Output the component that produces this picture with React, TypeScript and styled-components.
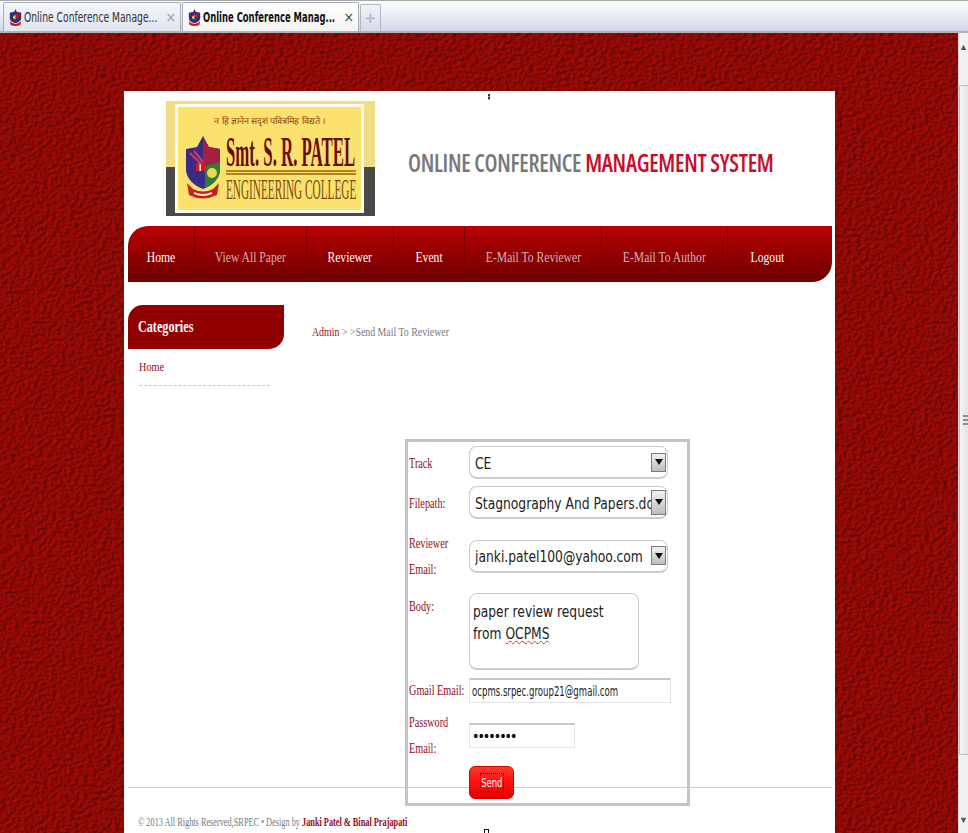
import React, { FC } from 'react';
import styled, { createGlobalStyle } from 'styled-components';

const leather = encodeURIComponent(
    `<svg xmlns='http://www.w3.org/2000/svg' width='300' height='300'><filter id='n' x='0' y='0' width='100%' height='100%' color-interpolation-filters='sRGB'><feTurbulence type='fractalNoise' baseFrequency='.22 .3' numOctaves='3' seed='7' stitchTiles='stitch'/><feDiffuseLighting surfaceScale='1.5' diffuseConstant='1.05' lighting-color='#a00b06'><feDistantLight azimuth='35' elevation='58'/></feDiffuseLighting></filter><rect width='100%' height='100%' filter='url(#n)'/></svg>`
);

const narrowSans = `'DejaVu Sans Condensed', 'DejaVu Sans', sans-serif`;

const GlobalStyle = createGlobalStyle`
    html, body {
        margin: 0;
        padding: 0;
        overflow: hidden;
    }
    body {
        font-family: 'Liberation Serif', serif;
    }
`;

const Screen = styled.div`
    position: relative;
    width: 968px;
    height: 833px;
    display: flex;
    flex-direction: column;
    overflow: hidden;
`;

// the text of the page is narrower than any installed font
const Squeeze = styled.span<{ $x: number; $center?: boolean }>`
    display: inline-block;
    white-space: nowrap;
    transform: scaleX(${({ $x }) => $x});
    transform-origin: ${({ $center }) => ($center ? 'center' : 'left')} center;
`;

/* browser chrome */
const TabBar = styled.div`
    height: 33px;
    box-sizing: border-box;
    display: flex;
    align-items: flex-end;
    gap: 1px;
    padding-left: 3px;
    border-top: 1px solid #a9a9a9;
    border-bottom: 2px solid #b4b4b4;
    background: linear-gradient(#fbfcfe 0%, #eef1f8 40%, #cfd7e8 100%);
    font-family: ${narrowSans};
    font-stretch: condensed;
`;

const Tab = styled.div<{ $active?: boolean }>`
    width: ${({ $active }) => ($active ? '177px' : '178px')};
    height: 29px;
    box-sizing: border-box;
    display: flex;
    align-items: center;
    gap: 2px;
    padding: 0 4px 0 5px;
    border: 1px solid #a8adb8;
    border-bottom: 0;
    border-radius: 2px 2px 0 0;
    background: ${({ $active }) => ($active ? 'linear-gradient(#ffffff, #f4f4f4)' : 'linear-gradient(#f4f6fa, #dfe4ef)')};
    color: ${({ $active }) => ($active ? '#111' : '#333')};
    font-size: 14px;
    font-weight: ${({ $active }) => ($active ? 700 : 400)};
    white-space: nowrap;
`;

const TabTitle = styled.span`
    flex: 1;
    min-width: 0;
    overflow: hidden;
`;

const TabClose = styled.span<{ $active?: boolean }>`
    color: ${({ $active }) => ($active ? '#444' : '#999')};
    font-size: 14px;
    font-weight: 400;
`;

const NewTab = styled.div`
    width: 21px;
    height: 27px;
    box-sizing: border-box;
    display: flex;
    align-items: center;
    justify-content: center;
    border: 1px solid #b0b5c0;
    border-bottom: 0;
    border-radius: 2px 2px 0 0;
    background: linear-gradient(#f0f2f7, #d5dbe9);
    color: #a9acb3;
    font-size: 13px;
`;

const Viewport = styled.div`
    flex: 1;
    min-height: 0;
    display: flex;
`;

const Backdrop = styled.div`
    flex: 1;
    min-width: 0;
    padding-top: 58px;
    padding-left: 124px;
    background-color: #8d0806;
    background-image: url("data:image/svg+xml,${leather}");
`;

const ScrollTrack = styled.div`
    width: 10px;
    display: flex;
    flex-direction: column;
    background: #f1f1f1;
    border-left: 1px solid #d8d8d8;
    box-sizing: border-box;
    overflow: hidden;
`;

const ScrollArrow = styled.div<{ $down?: boolean }>`
    height: ${({ $down }) => ($down ? 78 : 52)}px;
    display: flex;
    justify-content: flex-end;
    align-items: ${({ $down }) => ($down ? 'flex-end' : 'flex-start')};
    padding: ${({ $down }) => ($down ? '0 0 8px' : '10px 0 0')};
    box-sizing: border-box;
    color: #555;
    font-size: 9px;
    line-height: 9px;
`;

const ScrollThumb = styled.div`
    flex: 1;
    display: flex;
    flex-direction: column;
    justify-content: center;
    gap: 2px;
    padding-left: 3px;
    border: 1px solid #bdbdbd;
    border-right: 0;
    background: linear-gradient(90deg, #f4f4f4, #e3e3e3);
    border-radius: 2px 0 0 2px;
`;

const ScrollGrip = styled.div`
    height: 2px;
    background: #8f8f8f;
`;

/* page */
const Wrapper = styled.div`
    width: 711px;
    height: 760px;
    box-sizing: border-box;
    padding: 0 3px 0 4px;
    background: #fff;
`;

const Header = styled.header`
    height: 135px;
    box-sizing: border-box;
    display: flex;
    align-items: flex-start;
    padding: 10px 0 0 38px;
`;

const Logo = styled.div`
    flex: none;
    width: 209px;
    height: 115px;
    box-sizing: border-box;
    padding: 3px 11px 3px 9px;
    background: linear-gradient(#f2dd85 0 57%, #4a4a48 57% 100%);
`;

const LogoPanel = styled.div`
    height: 100%;
    box-sizing: border-box;
    border: 3px solid #fffdf0;
    background: #fbe26f;
    display: grid;
    grid-template-columns: 48px 1fr;
    grid-template-rows: 29px 1fr;
    overflow: hidden;
`;

const LogoMotto = styled.div`
    grid-column: 1 / 3;
    padding-top: 8px;
    text-align: center;
    color: #8c3a10;
    font-size: 9px;
    line-height: 12px;
    white-space: nowrap;
`;

const LogoCrest = styled.div`
    width: 36px;
    height: 66px;
    margin-left: 7px;
`;

const LogoText = styled.div`
    display: flex;
    flex-direction: column;
    width: 130px;
`;

const LogoName = styled.div`
    height: 32px;
    color: #6b0b08;
    font-size: 42px;
    line-height: 32px;
    font-weight: 700;
    white-space: nowrap;
    transform: scaleX(0.4);
    transform-origin: left center;
`;

const LogoRule = styled.div`
    height: 5px;
    margin-top: 2px;
    border-top: 2px solid #b8811f;
    border-bottom: 2px solid #b8811f;
    box-sizing: border-box;
`;

const LogoCollege = styled.div`
    height: 27px;
    color: #7b4c10;
    font-size: 30px;
    line-height: 27px;
    white-space: nowrap;
    transform: scaleX(0.375);
    transform-origin: left center;
`;

const SiteTitle = styled.h1`
    margin: 46px 0 0 33px;
    font-family: 'Open Sans', sans-serif;
    font-size: 25px;
    line-height: 30px;
    font-weight: 600;
    font-stretch: 75%;
    letter-spacing: -0.3px;
    color: #77787a;
`;

const TitleAccent = styled.span`
    color: #c60f2b;
    font-weight: 650;
`;

const Nav = styled.nav`
    height: 56px;
    display: flex;
    border-radius: 20px 0 20px 0;
    background: linear-gradient(#b90000, #6c0000);
    overflow: hidden;
`;

const NavItem = styled.a<{ $width: number; $muted?: boolean }>`
    width: ${({ $width }) => $width}px;
    box-sizing: border-box;
    display: flex;
    align-items: center;
    justify-content: center;
    padding-top: 6px;
    border-right: 1px solid #7d0000;
    color: ${({ $muted }) => ($muted ? '#cfb2bb' : '#fff')};
    font-size: 15.5px;
    &:last-child {
        border-right: 0;
        padding-right: 26px;
    }
`;

const Content = styled.div`
    height: 505px;
    display: flex;
`;

const Sidebar = styled.aside`
    width: 156px;
    padding-top: 23px;
`;

const SidebarTitle = styled.div`
    height: 44px;
    box-sizing: border-box;
    padding-left: 10px;
    display: flex;
    align-items: center;
    border-radius: 15px 0 15px 0;
    background: #930000;
    color: #fff;
    font-size: 16px;
    font-weight: 700;
`;

const SidebarLink = styled.a`
    display: block;
    width: 131px;
    margin: 9px 0 0 11px;
    padding-bottom: 10px;
    border-bottom: 1px dashed #c8c8c8;
    color: #8a0a1e;
    font-size: 13.5px;
    line-height: 17px;
`;

const Main = styled.main`
    flex: 1;
    padding: 41px 0 0 28px;
`;

const Breadcrumb = styled.div`
    height: 18px;
    color: #777b80;
    font-size: 13.5px;
    line-height: 18px;
`;

const BreadcrumbRoot = styled.span`
    color: #a80f1c;
`;

const FormBox = styled.form`
    width: 285px;
    height: 367px;
    box-sizing: border-box;
    margin: 98px 0 0 93px;
    padding: 4px 0 0 1px;
    border: 3px solid #c4c4c4;
    display: flex;
    flex-direction: column;
`;

const Row = styled.div<{ $top?: number; $start?: boolean }>`
    display: grid;
    grid-template-columns: 60px 1fr;
    align-items: ${({ $start }) => ($start ? 'start' : 'center')};
    margin-top: ${({ $top }) => $top ?? 0}px;
`;

const Label = styled.label`
    display: block;
    color: #8e0d1d;
    font-size: 14px;
    line-height: 26px;
    white-space: nowrap;
    transform: translateY(1px) scaleX(0.73);
    transform-origin: left center;
`;

const Select = styled.div`
    width: 199px;
    height: 33px;
    box-sizing: border-box;
    display: flex;
    align-items: center;
    padding: 0 1px 0 5px;
    border: 1px solid #cbcbcb;
    border-bottom-width: 2px;
    border-radius: 8px;
    background: #fff;
    font-family: ${narrowSans};
    font-stretch: condensed;
    font-size: 16px;
    color: #222;
`;

const SelectValue = styled.span`
    flex: 1;
    min-width: 0;
    padding-top: 2px;
    overflow: hidden;
    white-space: nowrap;
`;

const SelectArrow = styled.span<{ $height: number }>`
    flex: none;
    width: 15px;
    height: ${({ $height }) => $height}px;
    box-sizing: border-box;
    display: flex;
    align-items: center;
    justify-content: center;
    border: 1px solid #7c7c7c;
    background: linear-gradient(#f2f2f2, #bdbdbd);
    &::after {
        content: '';
        border-top: 6px solid #111;
        border-left: 4px solid transparent;
        border-right: 4px solid transparent;
    }
`;

const TextArea = styled.div`
    width: 170px;
    height: 77px;
    box-sizing: border-box;
    padding: 7px 3px;
    border: 1px solid #cbcbcb;
    border-bottom-width: 2px;
    border-radius: 8px;
    font-family: ${narrowSans};
    font-stretch: condensed;
    font-size: 15.5px;
    line-height: 22px;
    color: #222;
`;

const Misspelled = styled.span`
    text-decoration: underline wavy #e03030 1px;
`;

const TextField = styled.div<{ $width: number }>`
    width: ${({ $width }) => $width}px;
    height: 25px;
    box-sizing: border-box;
    display: flex;
    align-items: center;
    padding: 0 2px;
    border: 1px solid #e2e4ea;
    border-top: 2px solid #c9c9c9;
    font-family: ${narrowSans};
    font-stretch: condensed;
    font-size: 14px;
    color: #222;
    background: #fff;
`;

const PasswordInput = styled.input`
    width: 106px;
    height: 25px;
    box-sizing: border-box;
    padding: 0 2px;
    border: 1px solid #e2e4ea;
    border-top: 2px solid #c9c9c9;
    font-family: ${narrowSans};
    font-stretch: condensed;
    font-size: 14px;
    letter-spacing: -2px;
    color: #000;
    background: #fff;
    outline: none;
`;

const SendButton = styled.button`
    position: relative;
    width: 45px;
    height: 33px;
    padding: 0;
    display: flex;
    align-items: center;
    justify-content: center;
    border: 1px solid #d80000;
    border-radius: 6px;
    background: linear-gradient(#fa3a30 0%, #ff1210 45%, #e40000 100%);
    color: #fff;
    font-family: ${narrowSans};
    font-stretch: condensed;
    font-size: 13px;
`;

const SendLabel = styled.span`
    width: 24px;
    height: 19px;
    box-sizing: border-box;
    display: flex;
    align-items: center;
    justify-content: center;
    border: 1px dotted #300;
`;

const Footer = styled.footer`
    height: 46px;
    box-sizing: border-box;
    border-top: 1px solid #cdcdcd;
    padding: 26px 0 0 10px;
    color: #76797e;
    font-size: 11.5px;
    line-height: 16px;
`;

const FooterCredit = styled.span`
    color: #8e0d1d;
    font-weight: 700;
`;

const ResizeHandle = styled.div`
    position: absolute;
    left: 484px;
    top: 829px;
    width: 5px;
    height: 5px;
    box-sizing: border-box;
    border: 1px solid #111;
    background: #fff;
`;

const DragMark = styled.div`
    position: absolute;
    left: 488px;
    top: 94px;
    width: 2px;
    height: 6px;
    background: repeating-linear-gradient(#333 0 2px, #aaa 2px 3px);
`;

const Favicon: FC = () => (
    <svg width="13" height="17" viewBox="0 0 16 18" preserveAspectRatio="none">
        <path d="M8 0 L9.5 3 L15 4 L15 10 Q14 14 8 15 Q2 14 1 10 L1 4 L6.5 3 Z" fill="#3a2a7a" />
        <path d="M8 4 L13 6 L12 10 L8 9 Z" fill="#b02020" />
        <path d="M5 8 L8 6 L8 11 L5 10 Z" fill="#f0d040" />
        <path d="M1 13 Q8 19 15 13 L14 17 Q8 19 2 17 Z" fill="#c81818" />
    </svg>
);

const Crest: FC = () => (
    <svg viewBox="0 0 36 66">
        <path d="M18 0 L24 11 L35 13 L35 35 Q33 47 18 53 Q3 47 1 35 L1 13 L12 11 Z" fill="#3a2b84" />
        <path d="M18 2 L24 11 L35 13 L35 26 L18 30 Z" fill="#a52040" />
        <path d="M20 30 L35 26 L35 35 Q33 47 20 52 Z" fill="#2f7d3b" />
        <circle cx="27" cy="37" r="5" fill="#f2d94a" />
        <rect x="11" y="27" width="9" height="8" fill="#d81818" />
        <rect x="14.5" y="27" width="1.5" height="8" fill="#fff" />
        <path d="M5 17 L16 28 M9 15 L18 26" stroke="#d23a6a" strokeWidth="2" />
        <path d="M2 47 L8 53 Q18 58 28 53 L34 47 L32 59 Q18 66 4 59 Z" fill="#c51f1f" />
        <path d="M9 57 Q18 61 27 57" stroke="#f7e6c0" strokeWidth="2" fill="none" />
    </svg>
);

const navItems = [
    { label: 'Home', width: 67 },
    { label: 'View All Paper', width: 112, muted: true },
    { label: 'Reviewer', width: 87 },
    { label: 'Event', width: 71 },
    { label: 'E-Mail To Reviewer', width: 137, muted: true },
    { label: 'E-Mail To Author', width: 126, muted: true },
    { label: 'Logout', width: 104 },
];

const App: FC = () => (
    <Screen>
        <GlobalStyle />
        <TabBar>
            <Tab>
                <Favicon />
                <TabTitle>
                    <Squeeze $x={0.73}>Online Conference Manage...</Squeeze>
                </TabTitle>
                <TabClose>×</TabClose>
            </Tab>
            <Tab $active>
                <Favicon />
                <TabTitle>
                    <Squeeze $x={0.67}>Online Conference Manag...</Squeeze>
                </TabTitle>
                <TabClose $active>×</TabClose>
            </Tab>
            <NewTab>✛</NewTab>
        </TabBar>
        <Viewport>
            <Backdrop>
                <Wrapper>
                    <Header>
                        <Logo>
                            <LogoPanel>
                                <LogoMotto>न हि ज्ञानेन सदृशं पवित्रमिह विद्यते ।</LogoMotto>
                                <LogoCrest>
                                    <Crest />
                                </LogoCrest>
                                <LogoText>
                                    <LogoName>Smt. S. R. PATEL</LogoName>
                                    <LogoRule />
                                    <LogoCollege>ENGINEERING COLLEGE</LogoCollege>
                                </LogoText>
                            </LogoPanel>
                        </Logo>
                        <SiteTitle>
                            <Squeeze $x={0.915}>
                                ONLINE CONFERENCE <TitleAccent>MANAGEMENT SYSTEM</TitleAccent>
                            </Squeeze>
                        </SiteTitle>
                    </Header>
                    <Nav>
                        {navItems.map((item) => (
                            <NavItem key={item.label} $width={item.width} $muted={item.muted}>
                                <Squeeze $x={0.75} $center>
                                    {item.label}
                                </Squeeze>
                            </NavItem>
                        ))}
                    </Nav>
                    <Content>
                        <Sidebar>
                            <SidebarTitle>
                                <Squeeze $x={0.76}>Categories</Squeeze>
                            </SidebarTitle>
                            <SidebarLink>
                                <Squeeze $x={0.76}>Home</Squeeze>
                            </SidebarLink>
                        </Sidebar>
                        <Main>
                            <Breadcrumb>
                                <Squeeze $x={0.73}>
                                    <BreadcrumbRoot>Admin</BreadcrumbRoot> &gt; &gt;Send Mail To Reviewer
                                </Squeeze>
                            </Breadcrumb>
                            <FormBox>
                                <Row>
                                    <Label>Track</Label>
                                    <Select>
                                        <SelectValue>
                                            <Squeeze $x={0.855}>CE</Squeeze>
                                        </SelectValue>
                                        <SelectArrow $height={19} />
                                    </Select>
                                </Row>
                                <Row $top={7}>
                                    <Label>Filepath:</Label>
                                    <Select>
                                        <SelectValue>
                                            <Squeeze $x={0.855}>Stagnography And Papers.doc</Squeeze>
                                        </SelectValue>
                                        <SelectArrow $height={25} />
                                    </Select>
                                </Row>
                                <Row $top={11}>
                                    <Label>
                                        Reviewer
                                        <br />
                                        Email:
                                    </Label>
                                    <Select>
                                        <SelectValue>
                                            <Squeeze $x={0.855}>janki.patel100@yahoo.com</Squeeze>
                                        </SelectValue>
                                        <SelectArrow $height={19} />
                                    </Select>
                                </Row>
                                <Row $top={11} $start>
                                    <Label>Body:</Label>
                                    <TextArea>
                                        <Squeeze $x={0.88}>
                                            paper review request
                                            <br />
                                            from <Misspelled>OCPMS</Misspelled>
                                        </Squeeze>
                                    </TextArea>
                                </Row>
                                <Row $top={7}>
                                    <Label>Gmail Email:</Label>
                                    <TextField $width={202}>
                                        <Squeeze $x={0.68}>ocpms.srpec.group21@gmail.com</Squeeze>
                                    </TextField>
                                </Row>
                                <Row $top={6}>
                                    <Label>
                                        Password
                                        <br />
                                        Email:
                                    </Label>
                                    <PasswordInput type="password" readOnly value="password" />
                                </Row>
                                <Row $top={5}>
                                    <span />
                                    <SendButton type="button">
                                        <SendLabel>
                                            <Squeeze $x={0.72} $center>
                                                Send
                                            </Squeeze>
                                        </SendLabel>
                                    </SendButton>
                                </Row>
                            </FormBox>
                        </Main>
                    </Content>
                    <Footer>
                        <Squeeze $x={0.72}>
                            © 2013 All Rights Reserved,SRPEC • Design by <FooterCredit>Janki Patel &amp; Binal Prajapati</FooterCredit>
                        </Squeeze>
                    </Footer>
                </Wrapper>
            </Backdrop>
            <ScrollTrack>
                <ScrollArrow>▲</ScrollArrow>
                <ScrollThumb>
                    <ScrollGrip />
                    <ScrollGrip />
                    <ScrollGrip />
                </ScrollThumb>
                <ScrollArrow $down>▼</ScrollArrow>
            </ScrollTrack>
        </Viewport>
        <DragMark />
        <ResizeHandle />
    </Screen>
);

export default App;
